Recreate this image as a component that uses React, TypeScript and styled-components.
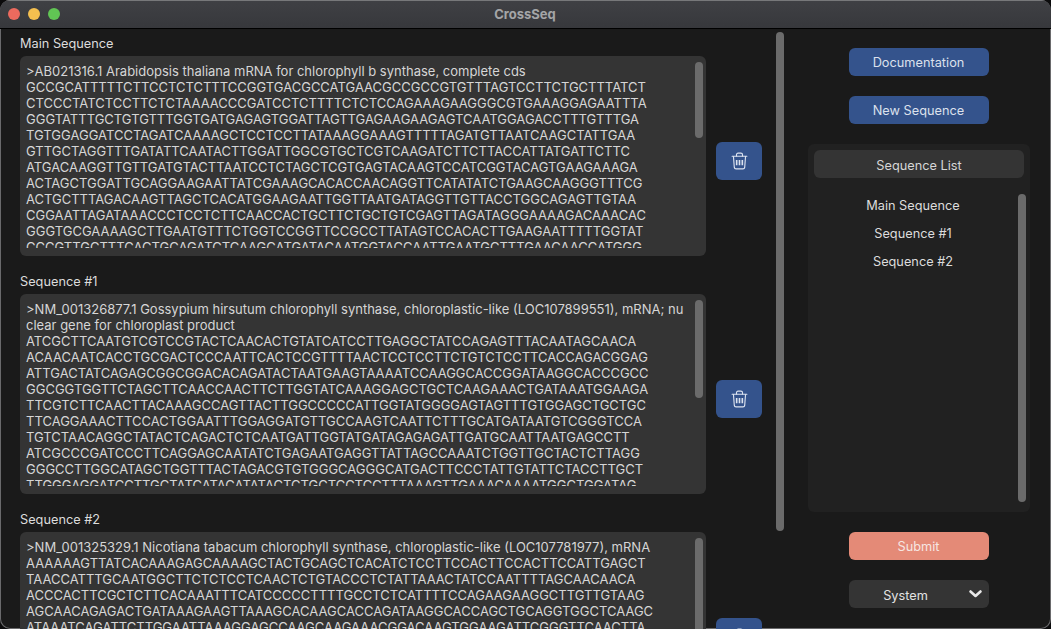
import React from "react";
import styled, { createGlobalStyle } from "styled-components";

const Global = createGlobalStyle`
  html, body { margin: 0; padding: 0; background: #0b0b0c; }
  body { width: 1051px; height: 629px; overflow: hidden; font-family: Inter, "Liberation Sans", sans-serif; }
  * { box-sizing: border-box; }
`;

const Window = styled.div`
  width: 1051px;
  height: 629px;
  display: flex;
  flex-direction: column;
  overflow: hidden;
  background: #1a1a1a;
  border-radius: 10px;
  box-shadow: inset 0 0 0 1px #6a6a6c;
  position: relative;
`;

const TitleBar = styled.header`
  height: 29px;
  flex: none;
  display: flex;
  align-items: center;
  justify-content: center;
  position: relative;
  background: linear-gradient(#3f4044, #37383c);
  border-top: 1px solid #77787a;
  border-bottom: 1px solid #000;
`;

const Lights = styled.div`
  position: absolute;
  left: 8px;
  top: 7px;
  display: flex;
  gap: 8px;
`;

const Light = styled.span<{ $c: string }>`
  width: 12px;
  height: 12px;
  border-radius: 50%;
  background: ${(p) => p.$c};
`;

const Title = styled.span`
  font-size: 13px;
  font-weight: 700;
  color: #a4a5a7;
  margin-top: -2px;
  margin-left: -1px;
`;

const Body = styled.main`
  flex: 1;
  min-height: 0;
  display: flex;
`;

const Left = styled.section`
  width: 776px;
  flex: none;
  padding: 8px 0 0 20px;
  overflow: hidden;
`;

const Block = styled.article`
  height: 238px;
  flex: none;
`;

const Label = styled.div`
  height: 19px;
  font-size: 12.75px;
  line-height: 14px;
  color: #dcdcdc;
`;

const Row = styled.div`
  display: flex;
  align-items: flex-start;
  gap: 10px;
`;

const SeqBox = styled.div`
  position: relative;
  width: 686px;
  height: 200px;
  flex: none;
  background: #343434;
  border-radius: 6px;
  padding: 7px 0 8px;
`;

const SeqText = styled.div`
  height: 185px;
  overflow: hidden;
  padding-left: 6px;
  font-size: 13px;
  line-height: 16px;
  color: #d6d6d6;
  white-space: nowrap;
`;

const Line = styled.div`
  height: 16px;
`;

const InnerThumb = styled.div<{ $h: number }>`
  position: absolute;
  left: 675px;
  top: 6px;
  width: 8px;
  height: ${(p) => p.$h}px;
  border-radius: 4px;
  background: #6b6b6b;
`;

const TrashButton = styled.button`
  width: 46px;
  height: 38px;
  margin-top: 86px;
  padding: 0;
  flex: none;
  border: 0;
  border-radius: 6px;
  background: #34538c;
  display: flex;
  align-items: center;
  justify-content: center;
`;

const OuterTrack = styled.div`
  width: 8px;
  flex: none;
  padding-top: 3px;
`;

const OuterThumb = styled.div`
  height: 499px;
  border-radius: 4px;
  background: #6b6b6b;
`;

const Side = styled.aside`
  flex: 1;
  padding: 19px 21px 0 24px;
  display: flex;
  flex-direction: column;
  align-items: center;
`;

const ActionButton = styled.button<{ $bg?: string; $fg?: string }>`
  width: 140px;
  height: 28px;
  flex: none;
  margin: 0 0 20px 0;
  border: 0;
  border-radius: 6px;
  background: ${(p) => p.$bg || "#34538c"};
  color: ${(p) => p.$fg || "#dce1ec"};
  font: 12.75px/29px Inter, "Liberation Sans", sans-serif;
  text-align: center;
  padding: 0 1px 0 0;
`;

const Panel = styled.div`
  position: relative;
  width: 222px;
  height: 368px;
  flex: none;
  margin-bottom: 20px;
  background: #212121;
  border-radius: 6px;
  padding: 6px;
`;

const PanelHeader = styled.div`
  height: 28px;
  border-radius: 6px;
  background: #343434;
  color: #d6d6d6;
  font-size: 12.75px;
  line-height: 31px;
  text-align: center;
  margin-bottom: 13px;
`;

const ListItem = styled.div`
  width: 198px;
  height: 28px;
  font-size: 12.75px;
  line-height: 30px;
  color: #dcdcdc;
  text-align: center;
`;

const PanelThumb = styled.div`
  position: absolute;
  left: 210px;
  top: 50px;
  width: 8px;
  height: 308px;
  border-radius: 4px;
  background: #6b6b6b;
`;

const SelectBox = styled.div`
  position: relative;
  width: 140px;
  height: 28px;
  flex: none;
  border-radius: 6px;
  background: #343434;
  color: #e2e2e2;
  font-size: 12.75px;
  line-height: 31px;
  padding-right: 27px;
  text-align: center;
`;

const Chevron = styled.svg`
  position: absolute;
  right: 6px;
  top: 9px;
`;

const seq1 = [
  ">AB021316.1 Arabidopsis thaliana mRNA for chlorophyll b synthase, complete cds",
  "GCCGCATTTTTCTTCCTCTCTTTCCGGTGACGCCATGAACGCCGCCGTGTTTAGTCCTTCTGCTTTATCT",
  "CTCCCTATCTCCTTCTCTAAAACCCGATCCTCTTTTCTCTCCAGAAAGAAGGGCGTGAAAGGAGAATTTA",
  "GGGTATTTGCTGTGTTTGGTGATGAGAGTGGATTAGTTGAGAAGAAGAGTCAATGGAGACCTTTGTTTGA",
  "TGTGGAGGATCCTAGATCAAAAGCTCCTCCTTATAAAGGAAAGTTTTTAGATGTTAATCAAGCTATTGAA",
  "GTTGCTAGGTTTGATATTCAATACTTGGATTGGCGTGCTCGTCAAGATCTTCTTACCATTATGATTCTTC",
  "ATGACAAGGTTGTTGATGTACTTAATCCTCTAGCTCGTGAGTACAAGTCCATCGGTACAGTGAAGAAAGA",
  "ACTAGCTGGATTGCAGGAAGAATTATCGAAAGCACACCAACAGGTTCATATATCTGAAGCAAGGGTTTCG",
  "ACTGCTTTAGACAAGTTAGCTCACATGGAAGAATTGGTTAATGATAGGTTGTTACCTGGCAGAGTTGTAA",
  "CGGAATTAGATAAACCCTCCTCTTCAACCACTGCTTCTGCTGTCGAGTTAGATAGGGAAAAGACAAACAC",
  "GGGTGCGAAAAGCTTGAATGTTTCTGGTCCGGTTCCGCCTTATAGTCCACACTTGAAGAATTTTTGGTAT",
  "CCCGTTGCTTTCACTGCAGATCTCAAGCATGATACAATGGTACCAATTGAATGCTTTGAACAACCATGGG",
];
const seq2 = [
  ">NM_001326877.1 Gossypium hirsutum chlorophyll synthase, chloroplastic-like (LOC107899551), mRNA; nu",
  "clear gene for chloroplast product",
  "ATCGCTTCAATGTCGTCCGTACTCAACACTGTATCATCCTTGAGGCTATCCAGAGTTTACAATAGCAACA",
  "ACAACAATCACCTGCGACTCCCAATTCACTCCGTTTTAACTCCTCCTTCTGTCTCCTTCACCAGACGGAG",
  "ATTGACTATCAGAGCGGCGGACACAGATACTAATGAAGTAAAATCCAAGGCACCGGATAAGGCACCCGCC",
  "GGCGGTGGTTCTAGCTTCAACCAACTTCTTGGTATCAAAGGAGCTGCTCAAGAAACTGATAAATGGAAGA",
  "TTCGTCTTCAACTTACAAAGCCAGTTACTTGGCCCCCATTGGTATGGGGAGTAGTTTGTGGAGCTGCTGC",
  "TTCAGGAAACTTCCACTGGAATTTGGAGGATGTTGCCAAGTCAATTCTTTGCATGATAATGTCGGGTCCA",
  "TGTCTAACAGGCTATACTCAGACTCTCAATGATTGGTATGATAGAGAGATTGATGCAATTAATGAGCCTT",
  "ATCGCCCGATCCCTTCAGGAGCAATATCTGAGAATGAGGTTATTAGCCAAATCTGGTTGCTACTCTTAGG",
  "GGGCCTTGGCATAGCTGGTTTACTAGACGTGTGGGCAGGGCATGACTTCCCTATTGTATTCTACCTTGCT",
  "TTGGGAGGATCCTTGCTATCATACATATACTCTGCTCCTCCTTTAAAGTTGAAACAAAATGGCTGGATAG",
];
const seq3 = [
  ">NM_001325329.1 Nicotiana tabacum chlorophyll synthase, chloroplastic-like (LOC107781977), mRNA",
  "AAAAAAGTTATCACAAAGAGCAAAAGCTACTGCAGCTCACATCTCCTTCCACTTCCACTTCCATTGAGCT",
  "TAACCATTTGCAATGGCTTCTCTCCTCAACTCTGTACCCTCTATTAAACTATCCAATTTTAGCAACAACA",
  "ACCCACTTCGCTCTTCACAAATTTCATCCCCCTTTTGCCTCTCATTTTCCAGAAGAAGGCTTGTTGTAAG",
  "AGCAACAGAGACTGATAAAGAAGTTAAAGCACAAGCACCAGATAAGGCACCAGCTGCAGGTGGCTCAAGC",
  "ATAAATCAGATTCTTGGAATTAAAGGAGCCAAGCAAGAAACGGACAAGTGGAAGATTCGGGTTCAACTTA",
  "CAAAGCCAGTTACTTGGCCACCATTGGTATGGGGAGTAGTTTGTGGAGCTGCTGCTTCAGGAAACTTCCA",
];

const TrashIcon = () => (
  <svg width="17" height="20" viewBox="0 0 18 20" fill="none" stroke="#dce3f0" strokeWidth="1.2" strokeLinecap="round" strokeLinejoin="round">
    <path d="M1.2 5h15.6" />
    <path d="M5.8 4.8V3.4c0-1 .7-1.7 1.7-1.7h3c1 0 1.7.7 1.7 1.7v1.4" />
    <path d="M2.6 5.2l.9 11.6c.1 1 .8 1.6 1.8 1.6h7.4c1 0 1.7-.6 1.8-1.6l.9-11.6" />
    <path d="M6 9v5.6M9 9v5.6M12 9v5.6" strokeWidth="1.7" strokeLinecap="butt" />
  </svg>
);

const blocks = [
  { name: "Main Sequence", lines: seq1, thumb: 76 },
  { name: "Sequence #1", lines: seq2, thumb: 98 },
  { name: "Sequence #2", lines: seq3, thumb: 120 },
];

export default function App() {
  return (
    <Window>
      <Global />
      <TitleBar>
        <Lights>
          <Light $c="#ec6a5e" />
          <Light $c="#f4bf4f" />
          <Light $c="#61c554" />
        </Lights>
        <Title>CrossSeq</Title>
      </TitleBar>
      <Body>
        <Left>
          {blocks.map((b) => (
            <Block key={b.name}>
              <Label>{b.name}</Label>
              <Row>
                <SeqBox>
                  <SeqText>
                    {b.lines.map((l, i) => (
                      <Line key={i}>{l}</Line>
                    ))}
                  </SeqText>
                  <InnerThumb $h={b.thumb} />
                </SeqBox>
                <TrashButton aria-label="Delete">
                  <TrashIcon />
                </TrashButton>
              </Row>
            </Block>
          ))}
        </Left>
        <OuterTrack>
          <OuterThumb />
        </OuterTrack>
        <Side>
          <ActionButton>Documentation</ActionButton>
          <ActionButton>New Sequence</ActionButton>
          <Panel>
            <PanelHeader>Sequence List</PanelHeader>
            <ListItem>Main Sequence</ListItem>
            <ListItem>Sequence #1</ListItem>
            <ListItem>Sequence #2</ListItem>
            <PanelThumb />
          </Panel>
          <ActionButton $bg="#e48a77" $fg="#f6e6e2">Submit</ActionButton>
          <SelectBox>
            System
            <Chevron width="15" height="10" viewBox="0 0 15 10" fill="none" stroke="#e8e8e8" strokeWidth="2.6" strokeLinecap="round" strokeLinejoin="round">
              <path d="M2.5 2.5L7.5 7L12.5 2.5" />
            </Chevron>
          </SelectBox>
        </Side>
      </Body>
    </Window>
  );
}
